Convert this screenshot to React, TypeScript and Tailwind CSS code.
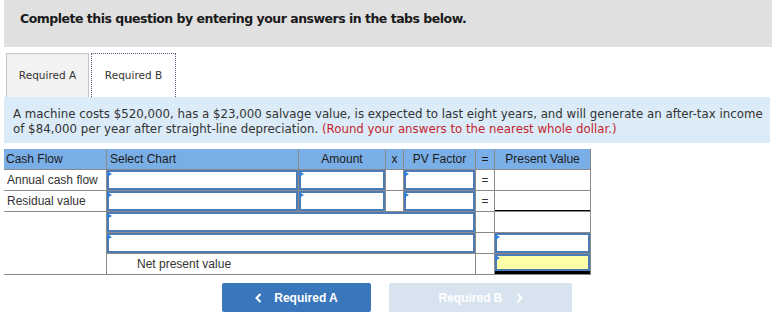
import React from "react";

const Tri = () => (
  <span className="absolute left-0 top-[1px] z-10 h-0 w-0 border-y-[3px] border-l-[5px] border-y-transparent border-l-[#2f7fdc]" />
);

const Input = ({ yellow = false, extra = "" }: { yellow?: boolean; extra?: string }) => (
  <div className={`relative h-full w-full ${extra}`}>
    <Tri />
    <div className={`h-full w-full border-2 border-[#4c7bb6] ${yellow ? "bg-[#ffffa8]" : "bg-white"}`} />
  </div>
);

export default function App() {
  return (
    <div className="w-[778px] h-[327px] bg-white overflow-hidden" style={{ fontFamily: "'DejaVu Sans', Verdana, sans-serif" }}>
      <div className="ml-[4px] w-[768px] h-[47px] bg-[#e0e0e0] flex items-center pl-[16px] pb-[9px]">
        <span className="text-[12.5px] tracking-[-0.5px] font-bold text-[#1a1a1a]">Complete this question by entering your answers in the tabs below.</span>
      </div>
      <div className="flex items-end h-[50px] pl-[6px] gap-[2px]">
        <div className="w-[83px] h-[44px] bg-[#f2f2f2] border border-b-0 border-[#c6c6c6] flex items-center justify-center text-[10.5px] text-[#333]">
          Required A
        </div>
        <div className="w-[85px] h-[44px] bg-white border border-dotted border-b-0 border-[#4a5a78] flex items-center justify-center text-[10.5px] text-[#333]">
          Required B
        </div>
      </div>
      <div className="ml-[4px] w-[766px] h-[46px] bg-[#dbebf8] pl-[9px] pt-[10px] text-[11.8px] leading-[15px] text-[#333] whitespace-nowrap">
        A machine costs $520,000, has a $23,000 salvage value, is expected to last eight years, and will generate an after-tax income
        <br />
        of $84,000 per year after straight-line depreciation.{" "}
        <span className="text-[#c4262e]">(Round your answers to the nearest whole dollar.)</span>
      </div>
      <div
        className="mt-[6px] ml-[4px] w-[587px] grid grid-cols-[102px_191px_86px_17px_71px_18px_95px] grid-rows-[20px_20px_20px_20px_20px_20px] gap-px bg-[#8a8a8a] border-b border-r border-[#8a8a8a] text-[12px] text-[#333]"
        style={{ fontFamily: "'Liberation Sans', Arial, sans-serif" }}
      >
        <div className="bg-[#79aee6] text-[#1c1c1c] pl-[2px] flex items-center">Cash Flow</div>
        <div className="bg-[#79aee6] text-[#1c1c1c] pl-[3px] flex items-center">Select Chart</div>
        <div className="bg-[#79aee6] text-[#1c1c1c] flex items-center justify-center">Amount</div>
        <div className="bg-[#79aee6] text-[#1c1c1c] flex items-center justify-center">x</div>
        <div className="bg-[#79aee6] text-[#1c1c1c] flex items-center justify-center">PV Factor</div>
        <div className="bg-[#79aee6] text-[#1c1c1c] flex items-center justify-center">=</div>
        <div className="bg-[#79aee6] text-[#1c1c1c] flex items-center justify-center">Present Value</div>

        <div className="bg-white pl-[3px] flex items-center">Annual cash flow</div>
        <div className="bg-white"><Input /></div>
        <div className="bg-white"><Input /></div>
        <div className="bg-white" />
        <div className="bg-white"><Input /></div>
        <div className="bg-white flex items-center justify-center">=</div>
        <div className="bg-white" />

        <div className="bg-white pl-[3px] flex items-center">Residual value</div>
        <div className="bg-white"><Input /></div>
        <div className="bg-white"><Input /></div>
        <div className="bg-white" />
        <div className="bg-white"><Input /></div>
        <div className="bg-white flex items-center justify-center">=</div>
        <div className="bg-white border-b border-black" />

        <div className="bg-white row-span-3" />
        <div className="bg-white col-span-4"><Input /></div>
        <div className="bg-white" />
        <div className="bg-white" />

        <div className="bg-white col-span-4"><Input /></div>
        <div className="bg-white" />
        <div className="bg-white"><Input /></div>

        <div className="bg-white col-span-4 pl-[30px] flex items-center">Net present value</div>
        <div className="bg-white" />
        <div className="bg-white flex flex-col">
          <div className="h-[17px]"><Input yellow /></div>
          <div className="h-[3px] bg-black" />
        </div>
      </div>
      <div className="mt-[8px] ml-[222px] flex gap-[18px]" style={{ fontFamily: "'Liberation Sans', Arial, sans-serif" }}>
        <div className="w-[149px] h-[29px] bg-[#3a76bc] rounded-[2px] flex items-center justify-center gap-[12px] text-white text-[12px] font-bold">
          <svg width="7" height="10" viewBox="0 0 7 10"><polyline points="5.5,1 1.5,5 5.5,9" fill="none" stroke="white" strokeWidth="2" /></svg>
          <span>Required A</span>
        </div>
        <div className="w-[183px] h-[29px] bg-[#d8e3f0] rounded-[2px] flex items-center justify-center gap-[13px] text-white text-[12px] font-bold">
          <span>Required B</span>
          <svg width="7" height="10" viewBox="0 0 7 10"><polyline points="1.5,1 5.5,5 1.5,9" fill="none" stroke="white" strokeWidth="2" /></svg>
        </div>
      </div>
    </div>
  );
}
